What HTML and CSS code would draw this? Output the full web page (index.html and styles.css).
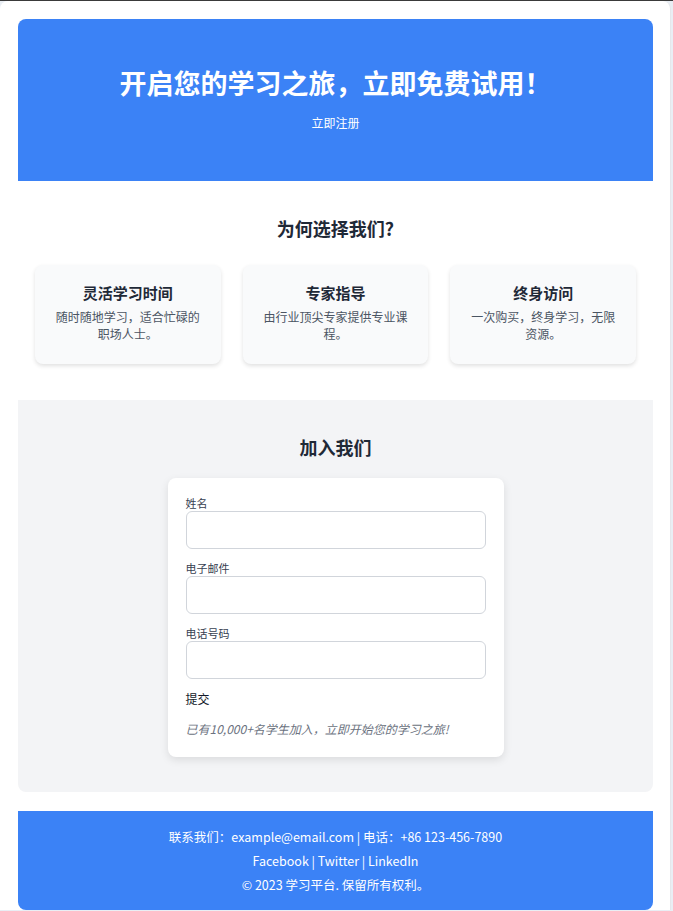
FILE: index.html
```html
<!DOCTYPE html>
<html lang="zh-CN">
<head>
<meta charset="UTF-8">
<title>学习平台</title>
<link rel="stylesheet" href="styles.css">
</head>
<body>
<div class="page">
  <section class="hero">
    <h1 class="hero-title">开启您的学习之旅，立即免费试用！</h1>
    <a class="hero-link" href="#join">立即注册</a>
  </section>

  <section class="features">
    <h2 class="section-title">为何选择我们?</h2>
    <div class="feature-grid">
      <div class="feature-card">
        <h3 class="feature-title">灵活学习时间</h3>
        <p class="feature-desc">随时随地学习，适合忙碌的职场人士。</p>
      </div>
      <div class="feature-card">
        <h3 class="feature-title">专家指导</h3>
        <p class="feature-desc">由行业顶尖专家提供专业课程。</p>
      </div>
      <div class="feature-card">
        <h3 class="feature-title">终身访问</h3>
        <p class="feature-desc">一次购买，终身学习，无限资源。</p>
      </div>
    </div>
  </section>

  <section class="join" id="join">
    <h2 class="section-title join-title">加入我们</h2>
    <form class="form-card">
      <label class="field-label" for="name">姓名</label>
      <input class="field-input" id="name" type="text">
      <label class="field-label" for="email">电子邮件</label>
      <input class="field-input" id="email" type="email">
      <label class="field-label" for="phone">电话号码</label>
      <input class="field-input field-last" id="phone" type="tel">
      <button class="submit" type="button">提交</button>
      <p class="note">已有10,000+名学生加入，立即开始您的学习之旅!</p>
    </form>
  </section>

  <footer class="footer">
    <p class="footer-line">联系我们：example@email.com | 电话：+86 123-456-7890</p>
    <p class="footer-line">Facebook | Twitter | LinkedIn</p>
    <p class="footer-line">© 2023 学习平台. 保留所有权利。</p>
  </footer>
</div>
</body>
</html>
```

FILE: styles.css
```css
* { box-sizing: border-box; }

html {
  background: #e9eef4;
}

body {
  margin: 0;
  border-top: 1px solid #3a3a3a;
  font-family: "Noto Sans CJK SC", "Noto Sans", sans-serif;
  color: #1f2937;
}

.page {
  width: 671px;
  background: #ffffff;
  border-right: 1px solid #e5e7eb;
  border-radius: 8px 8px 0 0;
  padding: 18px 17px 0 18px;
}

.hero {
  background: #3b82f6;
  border-radius: 8px 8px 0 0;
  padding: 46px 16px 49px;
  text-align: center;
  color: #ffffff;
}

.hero-title {
  margin: 0;
  font-size: 27px;
  line-height: 36px;
  font-weight: 700;
}

.hero-link {
  display: block;
  margin-top: 13px;
  font-size: 12px;
  line-height: 18px;
  color: #ffffff;
  text-decoration: none;
}

.features {
  padding: 33px 17px 36px;
}

.section-title {
  margin: 0;
  text-align: center;
  font-size: 18px;
  line-height: 28px;
  font-weight: 700;
  color: #1f2937;
}

.feature-grid {
  margin-top: 23px;
  display: grid;
  grid-template-columns: repeat(3, 1fr);
  gap: 22px;
}

.feature-card {
  background: #f9fafb;
  border-radius: 8px;
  box-shadow: 0 2px 4px rgba(0, 0, 0, 0.12);
  padding: 17px 16px 18px;
  text-align: center;
  height: 99px;
}

.feature-title {
  margin: 0;
  font-size: 15px;
  line-height: 22px;
  font-weight: 700;
  color: #1f2937;
}

.feature-desc {
  margin: 4px 0 0;
  font-size: 12px;
  line-height: 17px;
  color: #4b5563;
}

.join {
  background: #f3f4f6;
  border-radius: 0 0 8px 8px;
  padding: 33px 0 35px;
}

.join-title {
  margin-bottom: 17px;
}

.form-card {
  width: 336px;
  margin: 0 auto;
  background: #ffffff;
  border-radius: 8px;
  box-shadow: 0 3px 8px rgba(0, 0, 0, 0.1);
  padding: 18px 18px 19px;
  display: flex;
  flex-direction: column;
}

.field-label {
  font-size: 11px;
  line-height: 14px;
  color: #374151;
  margin-bottom: 1px;
}

.field-input {
  height: 38px;
  border: 1px solid #d1d5db;
  border-radius: 6px;
  margin: 0 0 12px;
  padding: 0 8px;
  font-family: inherit;
}

.field-last {
  margin-bottom: 11px;
}

.submit {
  align-self: flex-start;
  background: none;
  border: none;
  padding: 0;
  font-family: inherit;
  font-size: 12px;
  line-height: 18px;
  color: #111827;
}

.note {
  margin: 12px 0 0;
  font-size: 12px;
  line-height: 18px;
  font-style: italic;
  color: #6b7280;
}

.footer {
  margin-top: 19px;
  background: #3b82f6;
  border-radius: 0 0 8px 8px;
  padding: 14px 16px 13px;
  text-align: center;
  color: #ffffff;
}

.footer-line {
  margin: 0;
  font-size: 12.5px;
  line-height: 24px;
}
```
